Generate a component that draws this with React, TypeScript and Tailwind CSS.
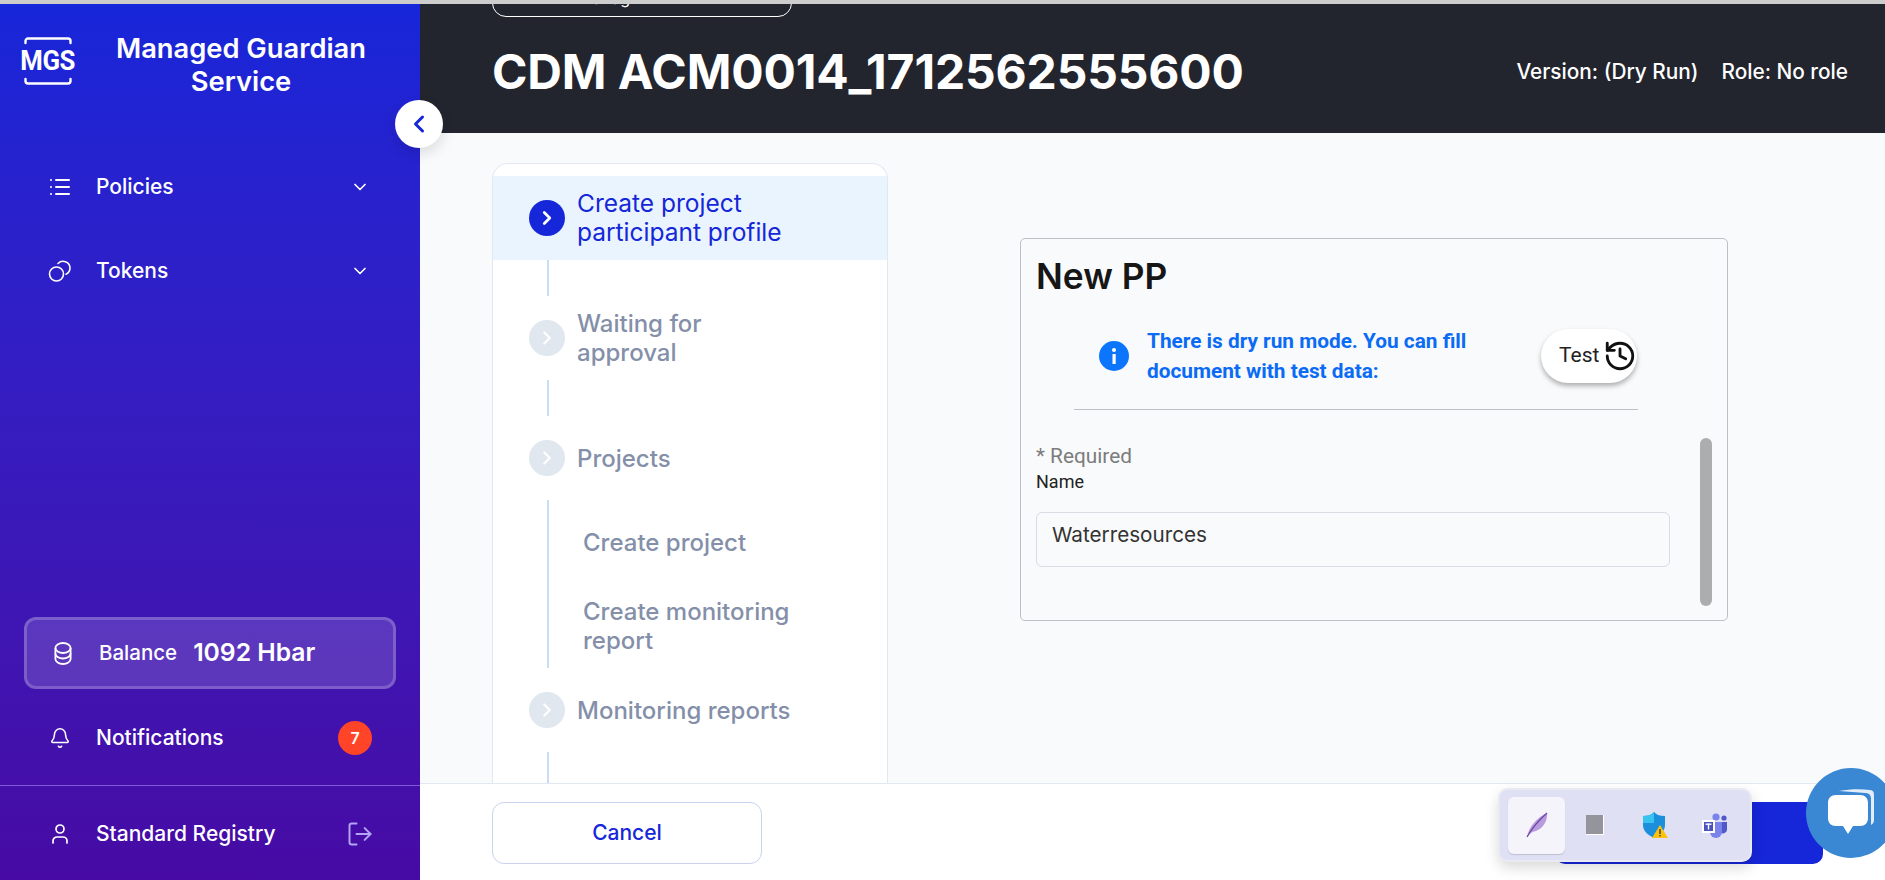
import React from 'react';
import { ChevronDown, ChevronLeft, ChevronRight, List, Bell, User, LogOut, History } from 'lucide-react';

const inter = 'font-["Inter",sans-serif]';
const roboto = 'font-["Roboto",sans-serif]';

// --- SIDEBAR ---
const Logo = () => (
  <div className="relative w-[48px] h-[48px] flex items-center justify-center">
    <svg className="absolute inset-0" width="48" height="48" viewBox="0 0 48 48" fill="none" stroke="white" strokeWidth="2.4" strokeLinecap="round">
      <path d="M1.5 6V4a2.5 2.5 0 0 1 2.5-2.5h40A2.5 2.5 0 0 1 46.5 4v2" />
      <path d="M1.5 42v2a2.5 2.5 0 0 0 2.5 2.5h40a2.5 2.5 0 0 0 2.5-2.5v-2" />
    </svg>
    <span className='font-["Roboto",sans-serif] font-bold text-white text-[28px] leading-none scale-x-[0.92] tracking-[-0.5px]'>MGS</span>
  </div>
);

const TokensIcon = () => (
  <svg width="24" height="24" viewBox="0 0 24 24" fill="none" stroke="white" strokeWidth="1.6">
    <circle cx="8.5" cy="15" r="7" />
    <path d="M10 4.5a7 7 0 0 1 12 4.5c0 3-1.6 5-4 6.2" strokeLinecap="round" />
  </svg>
);

const CoinsIcon = () => (
  <svg width="18" height="23" viewBox="0 0 18 23" fill="none" stroke="white" strokeWidth="1.8" className="ml-[27px]">
    <ellipse cx="9" cy="6" rx="7.6" ry="5" />
    <path d="M1.4 6v11c0 2.8 3.4 5 7.6 5s7.6-2.2 7.6-5V6" />
    <path d="M1.4 11.5c0 2.8 3.4 5 7.6 5s7.6-2.2 7.6-5" />
  </svg>
);

const NavItem: React.FC<{ icon: React.ReactNode; label: string }> = ({ icon, label }) => (
  <div className="flex items-center h-[84px] pl-[48px] pr-[50px] text-white">
    <div className="w-[24px] flex justify-center">{icon}</div>
    <span className="ml-[24px] text-[21px] font-medium flex-1">{label}</span>
    <ChevronDown className="w-[20px] h-[20px]" strokeWidth={2} />
  </div>
);

const Sidebar = () => (
  <div className={`relative w-[420px] shrink-0 flex flex-col bg-gradient-to-b from-[#1626d9] to-[#470aa4] ${inter}`}>
    <div className="flex items-center h-[110px] pl-[24px] pt-[4px]">
      <Logo />
      <div className="w-[338px] pt-[7px] text-center text-white text-[27.3px] leading-[33px] font-semibold">Managed Guardian<br />Service</div>
    </div>
    <div className="mt-[31px]">
      <NavItem icon={<List className="w-[24px] h-[24px]" strokeWidth={2} />} label="Policies" />
      <NavItem icon={<TokensIcon />} label="Tokens" />
    </div>
    <div className="flex-1" />
    <div className="mx-[24px] w-[372px] h-[72px] rounded-[12px] border-[3px] border-white/20 bg-white/15 flex items-center text-white">
      <CoinsIcon />
      <span className="ml-[27px] text-[20.5px] font-medium">Balance</span>
      <span className="ml-[16px] text-[24.7px] font-semibold">1092 Hbar</span>
    </div>
    <div className="flex items-center h-[96px] pl-[48px] pr-[48px] pt-[2px] text-white">
      <div className="w-[24px] flex justify-center"><Bell className="w-[22px] h-[22px]" strokeWidth={1.7} /></div>
      <span className="ml-[24px] text-[21px] font-medium flex-1">Notifications</span>
      <span className="w-[34px] h-[34px] rounded-full bg-[#ff4427] flex items-center justify-center text-[16px] font-semibold">7</span>
    </div>
    <div className="flex items-center h-[95px] border-t border-[#7b5bd6] pl-[48px] pr-[46px] pt-[2px] text-white">
      <div className="w-[24px] flex justify-center"><User className="w-[24px] h-[24px]" strokeWidth={1.7} /></div>
      <span className="ml-[24px] text-[21px] font-medium flex-1">Standard Registry</span>
      <LogOut className="w-[28px] h-[28px] text-[#b3a5f5]" strokeWidth={1.7} />
    </div>
    {/* collapse toggle */}
    <div className="absolute left-[395px] top-[96px] w-[48px] h-[48px] rounded-full bg-white flex items-center justify-center shadow-[0_6px_14px_rgba(0,0,0,0.12)] z-10">
      <ChevronLeft className="w-[28px] h-[28px] text-[#1626d9]" strokeWidth={2.6} />
    </div>
  </div>
);

// --- STEPS ---
const StepRow: React.FC<{ label: string; active?: boolean }> = ({ label, active }) => (
  <div className={`flex items-center h-[84px] pl-[36px] ${active ? 'bg-[#e9f4fe]' : ''}`}>
    <div className={`w-[36px] h-[36px] shrink-0 rounded-full flex items-center justify-center ${active ? 'bg-[#1626d9]' : 'bg-[#e1e7ef]'}`}>
      <ChevronRight className="w-[22px] h-[22px] text-white" strokeWidth={active ? 3 : 2.4} />
    </div>
    <div className={`ml-[12px] whitespace-pre-line leading-[29px] ${active ? 'text-[24.5px] text-[#1626d9]' : 'text-[24px] text-[#848fa9] font-medium'}`}>{label}</div>
  </div>
);

const Connector = () => <div className="ml-[54px] w-[2px] h-[36px] bg-[#c9dcf5]" />;

const Steps = () => (
  <div className={`w-[396px] h-[620px] shrink-0 bg-white border border-[#e2e8f2] border-b-0 rounded-t-[16px] pt-[12px] overflow-hidden ${inter}`}>
    <StepRow label={'Create project\nparticipant profile'} active />
    <Connector />
    <StepRow label={'Waiting for\napproval'} />
    <Connector />
    <StepRow label="Projects" />
    <div className="ml-[54px] h-[168px] border-l-2 border-[#c9dcf5] pl-[34px] text-[24px] leading-[29px] font-medium text-[#848fa9]">
      <div className="pt-[28px]">Create project</div>
      <div className="mt-[40px] w-[230px]">Create monitoring report</div>
    </div>
    <StepRow label="Monitoring reports" />
    <Connector />
  </div>
);

// --- FORM ---
const FormCard = () => (
  <div className={`relative ml-[132px] mt-[75px] w-[708px] h-[383px] rounded-[5px] border border-[#bdbfc4] ${roboto}`}>
    <div className={`pl-[15px] pt-[16px] text-[35.3px] leading-[44px] font-semibold text-[#161616] ${inter}`}>New PP</div>
    <div className="flex items-center pl-[78px] mt-[22px] h-[70px]">
      <svg width="30" height="30" viewBox="0 0 30 30" className="shrink-0">
        <circle cx="15" cy="15" r="15" fill="#0b76fb" />
        <rect x="13.5" y="13" width="3.2" height="10" fill="white" />
        <circle cx="15" cy="9" r="2" fill="white" />
      </svg>
      <div className="ml-[18px] w-[330px] text-[20.8px] leading-[30px] font-bold text-[#0b6bf5]">There is dry run mode. You can fill<br />document with test data:</div>
      <div className="ml-[64px] w-[96px] h-[54px] rounded-[27px] bg-white shadow-[0_3px_5px_rgba(0,0,0,0.3)] flex items-center pl-[18px] text-[21px] text-[#222]">
        Test
        <History className="ml-[4px] w-[34px] h-[34px] shrink-0 text-[#111]" strokeWidth={2} />
      </div>
    </div>
    <div className="ml-[53px] w-[564px] mt-[18px] border-t border-[#bdbfc4]" />
    <div className="pl-[15px] mt-[33px] text-[20.8px] leading-[26px] text-[#7c7c7c]">* Required</div>
    <div className="pl-[15px] text-[18px] leading-[26px] text-[#222]">Name</div>
    <div className={`ml-[15px] mt-[17px] w-[634px] h-[55px] rounded-[6px] border border-[#d9dce2] pl-[15px] pt-[9px] text-[20.7px] leading-[26px] text-[#333] ${inter}`}>Waterresources</div>
    {/* scrollbar thumb */}
    <div className="absolute left-[679px] top-[199px] w-[12px] h-[168px] rounded-full bg-[#acadaf]" />
  </div>
);

// --- OVERLAYS ---
const Feather = () => (
  <svg width="22" height="26" viewBox="0 0 22 26">
    <path d="M1 25C3 15 10 6 21 1c1 6-3 14-9 17-3 1.500-5 1.500-7 3-1.500 1-2.500 2.500-4 4z" fill="#b79bdc" />
    <path d="M1 25C6 16 13 8 21 1" stroke="#6b3fa8" strokeWidth="1.1" fill="none" />
  </svg>
);

const Shield = () => (
  <svg width="26" height="26" viewBox="0 0 26 26">
    <path d="M1 4c5 0 8-1 11-4 3 3 6 4 11 4v9c0 6-5 10-11 13C6 23 1 19 1 13z" fill="#1c8fdc" />
    <path d="M1 4c5 0 8-1 11-4v11H1z" fill="#37c3f0" />
    <path d="M18 13l8 13H10z" fill="#fdc20f" />
    <rect x="17.4" y="17" width="1.2" height="5" fill="#222" />
    <rect x="17.4" y="23" width="1.2" height="1.4" fill="#222" />
  </svg>
);

const Teams = () => (
  <svg width="26" height="26" viewBox="0 0 26 26">
    <circle cx="14" cy="5" r="3.6" fill="#7b83eb" />
    <circle cx="22" cy="6" r="2.6" fill="#5059c9" />
    <path d="M18 10h7v8a4 4 0 0 1-7 2z" fill="#5059c9" />
    <path d="M8 10h12v10a6 6 0 0 1-12 0z" fill="#7b83eb" />
    <rect x="0" y="8" width="13" height="13" fill="white" />
    <rect x="2" y="10" width="9" height="9" fill="#4b53bc" />
    <rect x="3.5" y="11.5" width="6" height="1.4" fill="white" />
    <rect x="5.8" y="11.5" width="1.4" height="6" fill="white" />
  </svg>
);

const Tray = () => (
  <div className="absolute left-[1498px] top-[788px] w-[254px] h-[74px] rounded-[10px] bg-[#dfe0f4] border-2 border-[#e9e9f2] shadow-[0_6px_14px_rgba(0,0,0,0.15)] flex items-center pl-[8px] z-20">
    <div className="w-[57px] h-[57px] rounded-[6px] bg-[#f5f4fb] shadow-[0_1px_1px_rgba(0,0,0,0.15)] flex items-center justify-center"><Feather /></div>
    <div className="w-[60px] flex justify-center"><div className="w-[18px] h-[20px] bg-[#94949c] border-r border-b border-white" /></div>
    <div className="w-[60px] flex justify-center"><Shield /></div>
    <div className="w-[60px] flex justify-center"><Teams /></div>
  </div>
);

const ChatBubble = () => (
  <div className="absolute left-[1806px] top-[768px] w-[90px] h-[90px] rounded-full bg-[#3a88d4] z-30 overflow-hidden">
    <svg width="90" height="90" viewBox="0 0 90 90" className="absolute inset-0">
      <path d="M33 23c11-2 22-2 31-1 4 .5 4 3 4 6v24c0 2-1 4-3 5V31c0-4-2-6-6-6-8-1-17-1-26-2z" fill="white" opacity="0.85" />
      <path d="M30 27h24c5 0 8 3 8 8v15c0 5-3 8-8 8h-7l-5 8-5-8h-7c-5 0-8-3-8-8V35c0-5 3-8 8-8z" fill="white" />
    </svg>
  </div>
);

export default function App() {
  return (
    <div className={`relative w-[1885px] h-[880px] overflow-hidden bg-[#f9fafc] ${inter}`}>
      <div className="h-[4px] bg-[#cdcdcd]" />
      <div className="flex h-[876px]">
        <Sidebar />
        <div className="flex-1 flex flex-col min-w-0">
          {/* Header */}
          <div className="h-[129px] shrink-0 bg-[#23252e] pl-[72px] pr-[37px] overflow-hidden relative">
            <div className="absolute left-[72px] top-[-40px] w-[300px] h-[53px] rounded-[14px] border border-white pr-[66px] pt-[21px] text-center text-white text-[16px]">Manage</div>
            <div className="flex items-center h-full pt-[6px] text-white">
              <h1 className="text-[48px] leading-none font-bold flex-1 tracking-[-0.15px]">CDM ACM0014_1712562555600</h1>
              <span className="text-[20.8px] font-medium">Version: (Dry Run)</span>
              <span className="ml-[23px] text-[20.8px] font-medium">Role: No role</span>
            </div>
          </div>
          {/* Content */}
          <div className="flex-1 flex pl-[72px] pt-[30px] min-h-0 overflow-hidden">
            <Steps />
            <FormCard />
          </div>
          {/* Footer */}
          <div className="h-[97px] shrink-0 bg-white border-t border-[#e2e8f2] flex items-center justify-between pl-[72px] pr-[62px] pt-[2px]">
            <div className="w-[270px] h-[62px] rounded-[12px] border border-[#c9d3f0] flex items-center justify-center text-[21px] font-medium text-[#1626d9]">Cancel</div>
            <div className="w-[268px] h-[62px] rounded-[10px] bg-[#1626d9]" />
          </div>
        </div>
      </div>
      <Tray />
      <ChatBubble />
    </div>
  );
}
